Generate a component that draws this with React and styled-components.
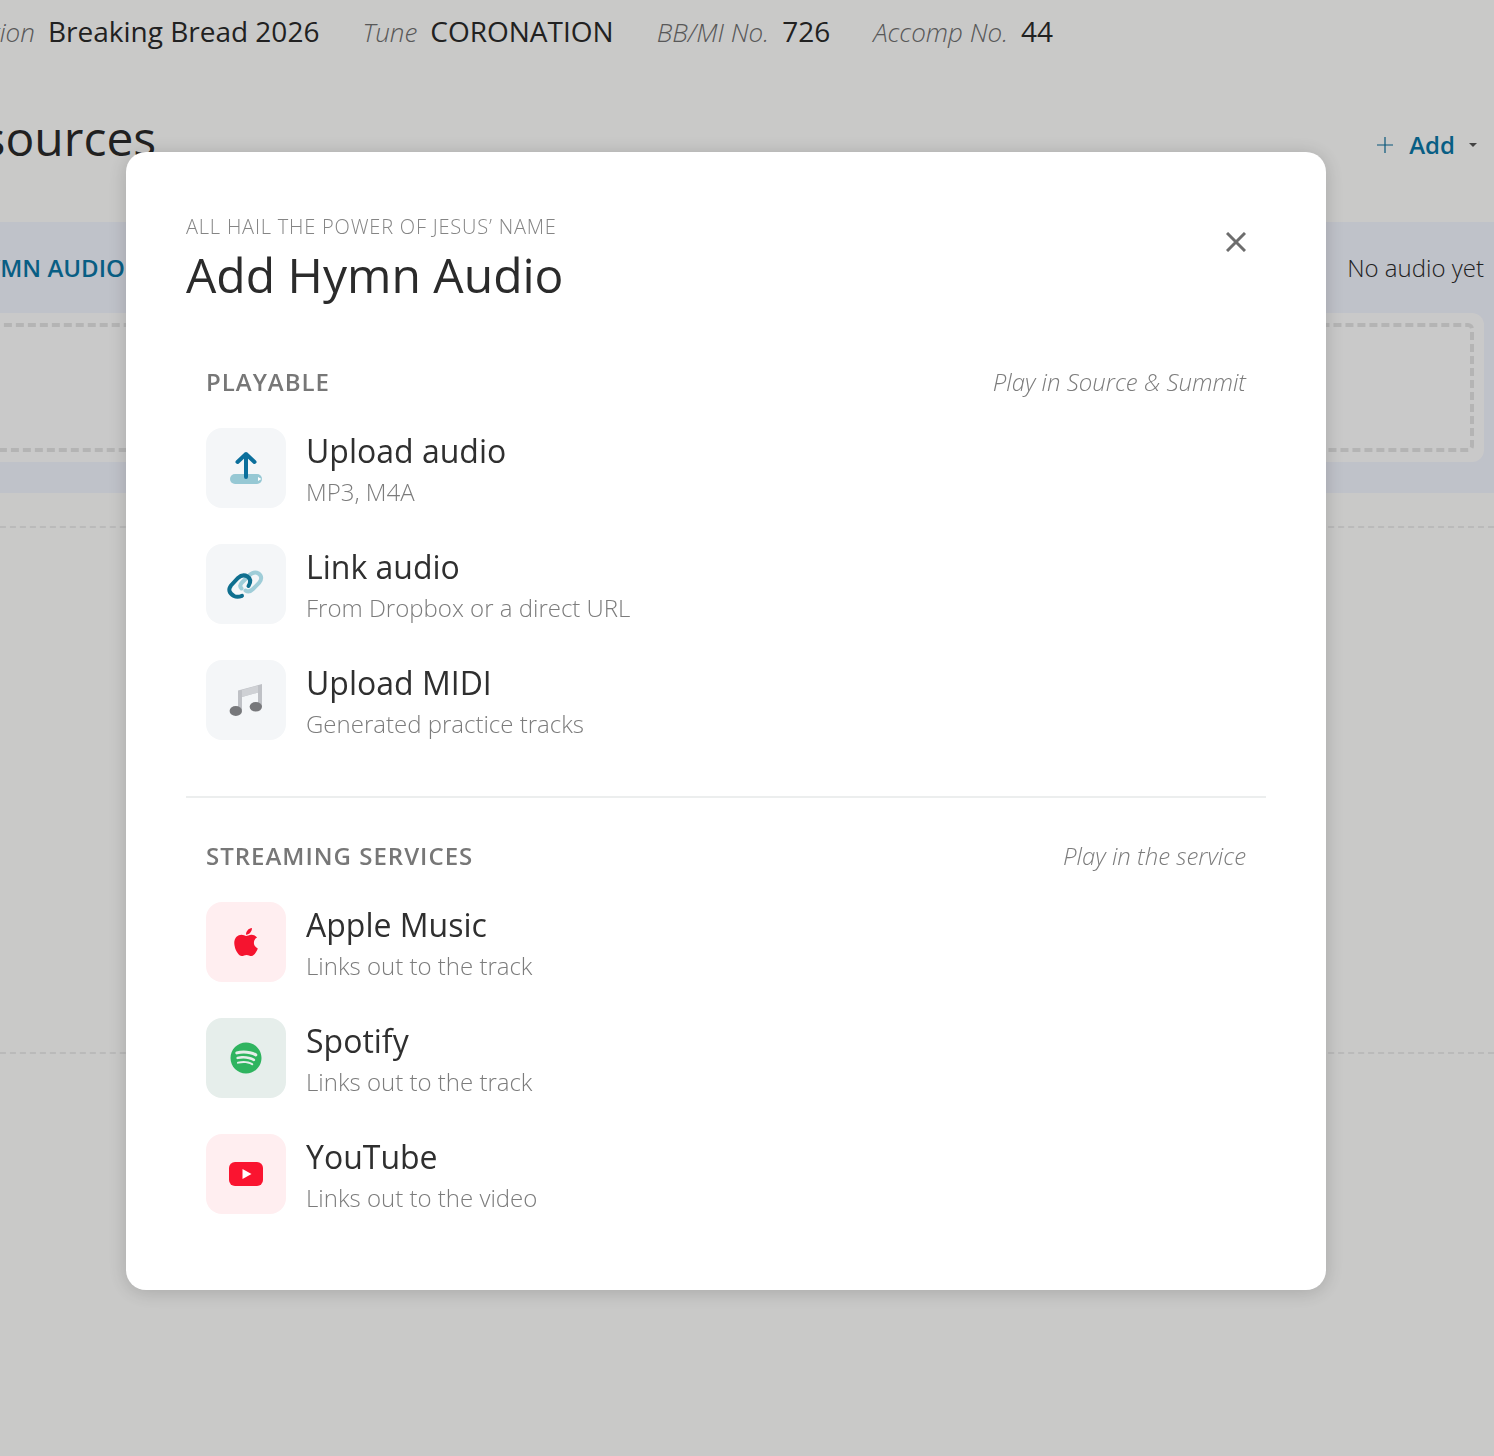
import React from "react"
import styled, { createGlobalStyle } from "styled-components"
import { FaApple, FaSpotify } from "react-icons/fa"

const GlobalStyle = createGlobalStyle`
  html, body {
    margin: 0;
    height: 1456px;
    overflow: hidden;
    background: #fffffe;
    font-family: "Open Sans", "Liberation Sans", sans-serif;
    color: #2b2b2b;
  }
`

const Page = styled.div`
  width: 1494px;
  height: 1456px;
  overflow: hidden;
`

const Content = styled.div`
  margin-left: -60px;
  width: 1554px;
`

const MetaRow = styled.div`
  display: flex;
  align-items: baseline;
  gap: 43px;
  height: 66px;
  padding: 11px 0 0 17px;
  box-sizing: border-box;
  font-size: 28px;
  line-height: 40px;
`

const Meta = styled.span`
  display: flex;
  align-items: baseline;
  gap: 13px;
`

const MetaLabel = styled.span`
  font-size: 26px;
  font-style: italic;
  font-weight: 300;
  color: #707070;
`

const TitleRow = styled.div`
  display: flex;
  justify-content: space-between;
  align-items: center;
  height: 156px;
  padding-right: 16px;
  box-sizing: border-box;
  font-size: 48px;
`

const PageTitle = styled.h1`
  margin: 0 0 14px -14px;
  font-size: 48px;
  font-weight: 400;
`

const AddButton = styled.div`
  display: flex;
  align-items: center;
  gap: 16px;
  color: #0b78a8;
  font-size: 24px;
  font-weight: 600;
`

const AddPlus = styled.svg`
  margin-top: 2px;
`

const AddCaret = styled.svg`
  margin: 2px 0 0 -3px;
`

const Band = styled.section`
  height: 271px;
  background: #f3f6ff;
  padding-right: 10px;
  box-sizing: border-box;
`

const BandHeader = styled.div`
  display: flex;
  justify-content: space-between;
  align-items: center;
  height: 91px;
  padding-left: 28px;
  font-size: 24px;
  font-weight: 300;
`

const BandTitle = styled.span`
  color: #0b78a8;
  font-weight: 600;
`

const DropCard = styled.div`
  height: 149px;
  background: #fff;
  border-radius: 12px;
  padding: 10px;
  box-sizing: border-box;
`

const DropArea = styled.div`
  height: 100%;
  border: 4px dashed #e5e5e5;
  border-radius: 6px;
  box-sizing: border-box;
`

const DashedRule = styled.div`
  height: 0;
  border-top: 2px dashed #ececec;
  margin-top: ${(p) => p.$top}px;
`

const Overlay = styled.div`
  position: fixed;
  inset: 0;
  background: rgba(0, 0, 0, 0.21);
  padding: 152px 0 0 126px;
`

const Modal = styled.div`
  width: 1200px;
  height: 1138px;
  box-sizing: border-box;
  padding: 60px;
  background: #fff;
  border-radius: 20px;
  box-shadow: 0 2px 20px rgba(0, 0, 0, 0.18);
`

const ModalHeader = styled.header`
  display: flex;
  justify-content: space-between;
  align-items: flex-start;
  height: 152px;
`

const Eyebrow = styled.div`
  font-size: 20px;
  font-weight: 300;
  line-height: 30px;
  letter-spacing: 0.8px;
  color: #858585;
`

const ModalTitle = styled.h2`
  margin: 0;
  font-size: 48px;
  font-weight: 400;
  line-height: 66px;
  color: #2b2b2b;
`

const CloseButton = styled.button`
  border: 0;
  padding: 0;
  background: none;
  width: 20px;
  height: 20px;
  margin: 20px 20px 0 0;
  color: #6d6d6d;
  display: block;
`

const Section = styled.section`
  padding: 0 20px;
`

const SectionHead = styled.div`
  display: flex;
  justify-content: space-between;
  align-items: center;
  height: 34px;
  margin-bottom: 30px;
`

const SectionLabel = styled.span`
  font-size: 24px;
  font-weight: 600;
  letter-spacing: 1px;
  color: #777;
`

const SectionHint = styled.span`
  font-size: 24px;
  font-weight: 300;
  font-style: italic;
  color: #7c7c7c;
`

const RowList = styled.div`
  display: flex;
  flex-direction: column;
  gap: 36px;
`

const Row = styled.div`
  display: flex;
  align-items: center;
  gap: 20px;
  height: 80px;
`

const IconTile = styled.div`
  width: 80px;
  height: 80px;
  flex: none;
  border-radius: 16px;
  background: ${(p) => p.$bg || "#f4f6f8"};
  color: ${(p) => p.$fg || "inherit"};
  display: flex;
  align-items: center;
  justify-content: center;
`

const RowText = styled.div`
  display: flex;
  flex-direction: column;
  padding-top: 2px;
`

const RowTitle = styled.div`
  font-size: 32px;
  line-height: 46px;
  color: #2f2f2f;
`

const RowSub = styled.div`
  font-size: 24px;
  font-weight: 300;
  line-height: 36px;
  color: #7c7c7c;
`

const Divider = styled.hr`
  border: 0;
  height: 2px;
  background: #eceeee;
  margin: 56px 0 40px;
`

const UploadIcon = () => (
  <svg width="40" height="40" viewBox="0 0 40 40" fill="none">
    <rect x="4" y="26" width="32" height="10" rx="5" fill="#96c8d4" />
    <path d="M32 29l3.500 2-3.500 2z" fill="#fff" />
    <path d="M20 29V6M11.500 14L20 6l8.500 8" stroke="#0b6f9c" strokeWidth="4" strokeLinecap="round" strokeLinejoin="round" />
  </svg>
)

const LinkIcon = () => (
  <svg width="40" height="40" viewBox="0 0 40 40" fill="none" strokeWidth="4" strokeLinecap="round">
    <path d="M15.500 24.500c-2-2-1.500-4 .5-6l6.500-6.500c4-4 7-4.500 10-2.500 3.500 2.500 3.500 6 .5 9.500l-6 6c-2.500 2.500-5 3-7.500 1.500" stroke="#9fcdd8" />
    <path d="M16 31.800c-2.500 1-5.500 1.500-8 .2-5-3-6-6.500-3-10.500l7-7.500c3-2.800 6-3.500 9.500-1.500 3 2 3.500 5.500 1 9.500" stroke="#0f6f8f" />
  </svg>
)

const MusicIcon = () => (
  <svg width="40" height="40" viewBox="0 0 40 40">
    <path d="M12 30V10.500L36 4v23h-4V12.500l-16 4.500v13z" fill="#bfc1c6" />
    <path d="M16 10l16-4.500v7l-16 4.500z" fill="#cfd1d5" />
    <ellipse cx="9.800" cy="31" rx="6.200" ry="5" fill="#77787b" />
    <ellipse cx="29.800" cy="26.800" rx="6.200" ry="4.800" fill="#77787b" />
  </svg>
)

const YoutubeIcon = () => (
  <svg width="34" height="24" viewBox="0 0 34 24">
    <rect width="34" height="24" rx="6" fill="#fa1430" />
    <path d="M13.500 7l9 5-9 5z" fill="#fff" />
  </svg>
)

const playable = [
  { title: "Upload audio", sub: "MP3, M4A", icon: <UploadIcon /> },
  { title: "Link audio", sub: "From Dropbox or a direct URL", icon: <LinkIcon /> },
  { title: "Upload MIDI", sub: "Generated practice tracks", icon: <MusicIcon /> },
]

const streaming = [
  { title: "Apple Music", sub: "Links out to the track", bg: "#ffeef0", fg: "#f5142f", icon: <FaApple size={32} /> },
  { title: "Spotify", sub: "Links out to the track", bg: "#e6eeeb", fg: "#2fb45f", icon: <FaSpotify size={32} /> },
  { title: "YouTube", sub: "Links out to the video", bg: "#ffeef0", icon: <YoutubeIcon /> },
]

const Rows = ({ items }) => (
  <RowList>
    {items.map((item) => (
      <Row key={item.title}>
        <IconTile $bg={item.bg} $fg={item.fg}>{item.icon}</IconTile>
        <RowText>
          <RowTitle>{item.title}</RowTitle>
          <RowSub>{item.sub}</RowSub>
        </RowText>
      </Row>
    ))}
  </RowList>
)

const App = () => (
  <Page>
    <GlobalStyle />
    <Content>
      <MetaRow>
        <Meta><MetaLabel>Edition</MetaLabel>Breaking Bread 2026</Meta>
        <Meta><MetaLabel>Tune</MetaLabel>CORONATION</Meta>
        <Meta><MetaLabel>BB/MI No.</MetaLabel>726</Meta>
        <Meta><MetaLabel>Accomp No.</MetaLabel>44</Meta>
      </MetaRow>
      <TitleRow>
        <PageTitle>Resources</PageTitle>
        <AddButton>
          <AddPlus width="16" height="16" viewBox="0 0 16 16" stroke="#0b6f9c" strokeWidth="1.200">
            <path d="M8 0v16M0 8h16" />
          </AddPlus>
          Add
          <AddCaret width="10" height="6" viewBox="0 0 10 6">
            <path d="M1 1h8L5 5z" fill="#555" />
          </AddCaret>
        </AddButton>
      </TitleRow>
      <Band>
        <BandHeader>
          <BandTitle>HYMN AUDIO</BandTitle>
          <span>No audio yet</span>
        </BandHeader>
        <DropCard><DropArea /></DropCard>
      </Band>
      <DashedRule $top={33} />
      <DashedRule $top={524} />
    </Content>
    <Overlay>
      <Modal>
        <ModalHeader>
          <div>
            <Eyebrow>ALL HAIL THE POWER OF JESUS’ NAME</Eyebrow>
            <ModalTitle>Add Hymn Audio</ModalTitle>
          </div>
          <CloseButton aria-label="Close">
            <svg width="20" height="20" viewBox="0 0 20 20" stroke="currentColor" strokeWidth="3">
              <path d="M1 1l18 18M19 1L1 19" />
            </svg>
          </CloseButton>
        </ModalHeader>
        <Section>
          <SectionHead>
            <SectionLabel>PLAYABLE</SectionLabel>
            <SectionHint>Play in Source &amp; Summit</SectionHint>
          </SectionHead>
          <Rows items={playable} />
        </Section>
        <Divider />
        <Section>
          <SectionHead>
            <SectionLabel>STREAMING SERVICES</SectionLabel>
            <SectionHint>Play in the service</SectionHint>
          </SectionHead>
          <Rows items={streaming} />
        </Section>
      </Modal>
    </Overlay>
  </Page>
)

export default App
